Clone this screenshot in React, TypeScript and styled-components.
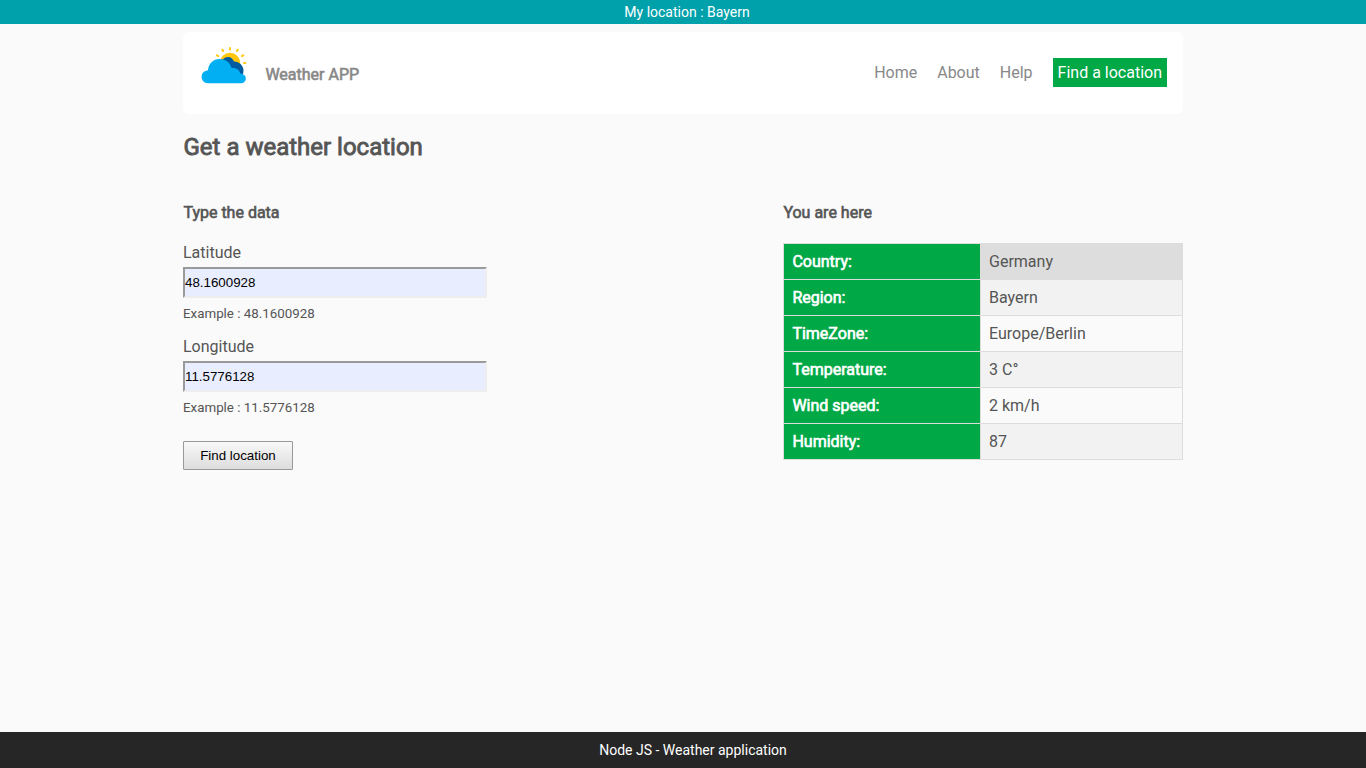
import React from "react";
import styled, { createGlobalStyle, css } from "styled-components";

const GlobalStyle = createGlobalStyle`
  * { box-sizing: border-box; }
  body {
    margin: 0;
    background: #fafafa;
    color: #555;
    font: 400 16px/19px Roboto, "Liberation Sans", sans-serif;
  }
`;

const heavy = css<{ $stroke?: number }>`
  font-weight: 400;
  -webkit-text-stroke: ${({ $stroke = 0.62 }) => $stroke}px currentColor;
`;

const Page = styled.div`
  min-height: 100vh;
  display: flex;
  flex-direction: column;
`;

const TopBar = styled.div`
  height: 24px;
  padding-left: 8px;
  background: #00a1ab;
  color: #fff;
  font-size: 14px;
  line-height: 24px;
  text-align: center;
`;

const Container = styled.div`
  width: 1000px;
  margin: 8px auto 0;
  flex: 1;
`;

const Header = styled.header`
  height: 82px;
  padding: 14px 16px 0 18px;
  display: flex;
  align-items: flex-start;
  background: #fff;
  border-radius: 6px;
`;

const Logo = styled.svg`
  width: 46px;
  height: 38px;
  flex: none;
`;

const Brand = styled.span`
  ${heavy}
  margin: 19px auto 0 18.400px;
  color: #888;
`;

const Nav = styled.nav`
  display: flex;
  gap: 10px;
  padding-top: 12px;
`;

const NavLink = styled.a<{ $active?: boolean }>`
  height: 29px;
  padding: 5px;
  color: ${({ $active }) => ($active ? "#fff" : "#888")};
  background: ${({ $active }) => ($active ? "#00a846" : "transparent")};
  margin-left: ${({ $active }) => ($active ? "5px" : "0")};
`;

const Title = styled.h1`
  ${heavy}
  margin: 19px 0 0;
  padding-left: 0.5px;
  font-size: 24px;
  line-height: 28px;
`;

const Columns = styled.main`
  display: flex;
  justify-content: space-between;
  margin-top: 42px;
`;

const FormColumn = styled.form`
  width: 304px;
`;

const InfoColumn = styled.section`
  width: 400px;
`;

const Subtitle = styled.h2`
  ${heavy}
  margin: 0 0 21px;
  padding-left: 0.4px;
  font-size: 16px;
  line-height: 19px;
`;

const Field = styled.div`
  height: 94px;
`;

const Label = styled.label`
  display: block;
  margin-bottom: 5px;
`;

const Input = styled.input`
  display: block;
  width: 304px;
  height: 31px;
  padding: 0;
  border: 2px solid;
  border-color: #9a9a9a #eee #eee #9a9a9a;
  border-radius: 0;
  background: #e8eeff;
  color: #000;
  font: 13.333px "Liberation Sans", Arial, sans-serif;
`;

const Hint = styled.small`
  display: block;
  margin-top: 8px;
  font-size: 13.333px;
  line-height: 16px;
`;

const Button = styled.button`
  display: block;
  width: 110px;
  height: 29px;
  margin-top: 10px;
  padding: 0;
  border: 1px solid #999;
  border-radius: 1px;
  background: linear-gradient(#f8f8f8, #dddddd);
  color: #000;
  font: 13.333px "Liberation Sans", Arial, sans-serif;
`;

const Table = styled.table`
  width: 400px;
  margin-top: 21px;
  border-collapse: collapse;
  table-layout: fixed;
`;

const Row = styled.tr<{ $highlight?: boolean }>`
  background: ${({ $highlight }) => ($highlight ? "#ddd" : "transparent")};
  &:nth-child(even) { background: #f2f2f2; }
`;

const HeadCell = styled.th`
  ${heavy}
  width: 197px;
  padding: 8px 8px 8px 8.400px;
  border: 1px solid #ddd;
  background: #00a846;
  color: #fff;
  text-align: left;
`;

const Cell = styled.td`
  padding: 8px;
  border: 1px solid #ddd;
`;

const Footer = styled.footer`
  height: 36px;
  padding-left: 20px;
  background: #262626;
  color: #fff;
  font-size: 14px;
  line-height: 36px;
  text-align: center;
`;

const links = ["Home", "About", "Help"];

const fields = [
  { id: "latitude", label: "Latitude", value: "48.1600928" },
  { id: "longitude", label: "Longitude", value: "11.5776128" },
];

const facts = [
  ["Country:", "Germany"],
  ["Region:", "Bayern"],
  ["TimeZone:", "Europe/Berlin"],
  ["Temperature:", "3 C°"],
  ["Wind speed:", "2 km/h"],
  ["Humidity:", "87"],
];

function WeatherLogo() {
  return (
    <Logo viewBox="0 0 46 38" aria-hidden="true">
      <g stroke="#ffc60b" strokeWidth="2" strokeLinecap="round">
        <path d="M29 1.900v1.500M21.400 3.700l.7 1.300M36.700 3.700l-.7 1.300M15.900 9.300l1.300.8M42.200 9.300l-1.300.8M43 17h1.400" />
      </g>
      <circle cx="29" cy="17" r="10.200" fill="#ffc60b" />
      <path
        fill="#005ba1"
        d="M21.500 14C22.800 12 24.800 10.900 27.200 10.900C29.800 10.900 31.900 12.700 33 15.500C38.600 15.800 42.500 19.800 42.500 24.500C42.500 26 42.200 27.600 41.500 29L30 29Z"
      />
      <path
        fill="#03aff3"
        d="M7.200 37.300C3.400 37.300.6 34.500.6 30.800c0-3.600 2.700-6.300 6.400-6.600C7.400 17.700 12.300 13 18.600 13c5.900 0 10.500 3.700 12 9 4.400-.7 7.800 1.600 8.700 5.600 3.300.2 5.500 2.200 5.500 4.900 0 2.800-2.200 4.800-5.200 4.800z"
      />
    </Logo>
  );
}

export default function App() {
  return (
    <Page>
      <GlobalStyle />
      <TopBar>My location : Bayern</TopBar>
      <Container>
        <Header>
          <WeatherLogo />
          <Brand>Weather APP</Brand>
          <Nav>
            {links.map((text) => (
              <NavLink key={text}>{text}</NavLink>
            ))}
            <NavLink $active>Find a location</NavLink>
          </Nav>
        </Header>
        <Title $stroke={0.85}>Get a weather location</Title>
        <Columns>
          <FormColumn>
            <Subtitle>Type the data</Subtitle>
            {fields.map(({ id, label, value }) => (
              <Field key={id}>
                <Label htmlFor={id}>{label}</Label>
                <Input id={id} defaultValue={value} />
                <Hint>Example : {value}</Hint>
              </Field>
            ))}
            <Button type="button">Find location</Button>
          </FormColumn>
          <InfoColumn>
            <Subtitle>You are here</Subtitle>
            <Table>
              <tbody>
                {facts.map(([name, value], i) => (
                  <Row key={name} $highlight={i === 0}>
                    <HeadCell>{name}</HeadCell>
                    <Cell>{value}</Cell>
                  </Row>
                ))}
              </tbody>
            </Table>
          </InfoColumn>
        </Columns>
      </Container>
      <Footer>Node JS - Weather application</Footer>
    </Page>
  );
}
